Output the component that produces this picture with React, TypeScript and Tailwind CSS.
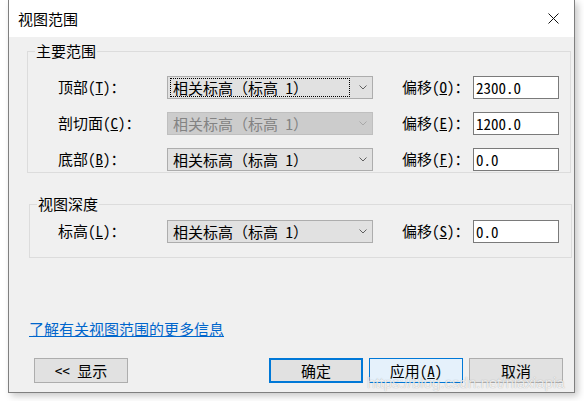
import type { ReactNode } from 'react';

// ─── Shared bits ───────────────────────────────────────────────────────────

const BODY_FONT =
  "[font-family:'Noto_Sans_Mono_CJK_SC','Noto_Sans_CJK_SC',sans-serif]";

function Chevron({ color }: { color: string }) {
  return (
    <svg width="8" height="5" viewBox="0 0 8 5" fill="none">
      <path d="M0.5 0.5 L4 4 L7.5 0.5" stroke={color} strokeWidth="1" />
    </svg>
  );
}

function Combo({ disabled, focused }: { disabled?: boolean; focused?: boolean }) {
  return (
    <div
      className={`flex h-[23px] w-[206px] items-center border ${
        disabled
          ? 'border-[#bfbfbf] bg-[#cccccc] text-[#838383]'
          : 'border-[#adadad] bg-[#e1e1e1] text-black'
      }`}
    >
      <div className="flex flex-1 items-center pl-[2px]">
        <span
          className={`flex h-[19px] flex-1 items-center pl-[2px] leading-none ${
            focused ? 'border border-dotted border-black' : 'border border-transparent'
          }`}
        >
          相关标高（标高 1）
        </span>
      </div>
      <div className="flex w-[22px] justify-center pl-[4px]">
        <Chevron color={disabled ? '#a8a8a8' : '#606060'} />
      </div>
    </div>
  );
}

function NumberBox({ value }: { value: string }) {
  return (
    <div className="flex h-[23px] w-[86px] items-center border border-[#7a7a7a] bg-white pl-[2px] leading-none">
      {value}
    </div>
  );
}

function Row({
  label,
  offsetLabel,
  value,
  disabled,
  focused,
}: {
  label: ReactNode;
  offsetLabel: ReactNode;
  value: string;
  disabled?: boolean;
  focused?: boolean;
}) {
  return (
    <div className="flex h-[23px] items-center">
      <span className="w-[109px] whitespace-nowrap">{label}</span>
      <Combo disabled={disabled} focused={focused} />
      <span className="ml-[29px] w-[71px] whitespace-nowrap">{offsetLabel}</span>
      <NumberBox value={value} />
    </div>
  );
}

function Group({
  title,
  className,
  children,
}: {
  title: string;
  className: string;
  children: ReactNode;
}) {
  return (
    <fieldset className={`border border-[#dcdcdc] ${className}`}>
      <legend className="ml-[7px] px-[1px] leading-[18px]">{title}</legend>
      {children}
    </fieldset>
  );
}

function Button({
  children,
  variant = 'normal',
}: {
  children: ReactNode;
  variant?: 'normal' | 'default' | 'hover';
}) {
  const look =
    variant === 'default'
      ? 'border-2 border-[#0078d7] bg-[#e1e1e1]'
      : variant === 'hover'
        ? 'border border-[#0078d7] bg-[#e5f1fb]'
        : 'border border-[#adadad] bg-[#e1e1e1]';
  return (
    <div className={`flex h-[25px] w-[94px] items-center justify-center leading-none ${look}`}>
      {children}
    </div>
  );
}

// ─── Dialog ────────────────────────────────────────────────────────────────

export default function App() {
  return (
    <div className="relative h-[401px] w-[584px] overflow-hidden bg-white pl-[8px]">
      <div
        className={`flex h-[393px] w-[567px] flex-col border-x border-b border-[#7f7f7f] text-[15px] text-black shadow-[3px_3px_7px_rgba(0,0,0,0.22)] ${BODY_FONT}`}
      >
        {/* Title bar */}
        <div className="flex h-[37px] items-center justify-between bg-white pl-[9px] pr-[15px]">
          <span className="text-[15px] leading-none [font-family:'Noto_Sans_CJK_SC',sans-serif]">
            视图范围
          </span>
          <svg width="11" height="11" viewBox="0 0 11 11" fill="none">
            <path d="M0.5 0.5 L10.5 10.5 M10.5 0.5 L0.5 10.5" stroke="#111" strokeWidth="1" />
          </svg>
        </div>

        {/* Body */}
        <div className="flex flex-1 flex-col bg-[#f0f0f0]">
          <Group title="主要范围" className="ml-[18px] mr-[3px] mt-[5px]">
            <div className="flex flex-col gap-[13px] pb-[1px] pl-[30px] pt-[16px]">
              <Row
                focused
                label={<>顶部(<u>T</u>)：</>}
                offsetLabel={<>偏移(<u>O</u>)：</>}
                value="2300.0"
              />
              <Row
                disabled
                label={<>剖切面(<u>C</u>)：</>}
                offsetLabel={<>偏移(<u>E</u>)：</>}
                value="1200.0"
              />
              <Row
                label={<>底部(<u>B</u>)：</>}
                offsetLabel={<>偏移(<u>F</u>)：</>}
                value="0.0"
              />
            </div>
          </Group>

          <Group title="视图深度" className="ml-[20px] mr-[2px] mt-[22px]">
            <div className="pb-[14px] pl-[28px] pt-[7px]">
              <Row
                label={<>标高(<u>L</u>)：</>}
                offsetLabel={<>偏移(<u>S</u>)：</>}
                value="0.0"
              />
            </div>
          </Group>

          <div className="ml-[20px] mt-[62px] leading-[18px]">
            <span className="text-[#0066cc] underline">了解有关视图范围的更多信息</span>
          </div>

          <div className="mt-[20px] flex items-center justify-between pl-[25px] pr-[11px]">
            <Button>&lt;&lt; 显示</Button>
            <div className="flex gap-[6px]">
              <Button variant="default">确定</Button>
              <Button variant="hover">
                应用(<u>A</u>)
              </Button>
              <Button>取消</Button>
            </div>
          </div>
        </div>
      </div>

      {/* Blog watermark over the buttons */}
      <div className="pointer-events-none absolute left-[367px] top-[374px] whitespace-nowrap text-[15px] leading-[18px] text-white/80 [font-family:'Liberation_Sans',sans-serif] [text-shadow:0_0_1px_rgba(0,0,0,0.35)]">
        https://blog.csdn.net/niaxiapia
      </div>
    </div>
  );
}
